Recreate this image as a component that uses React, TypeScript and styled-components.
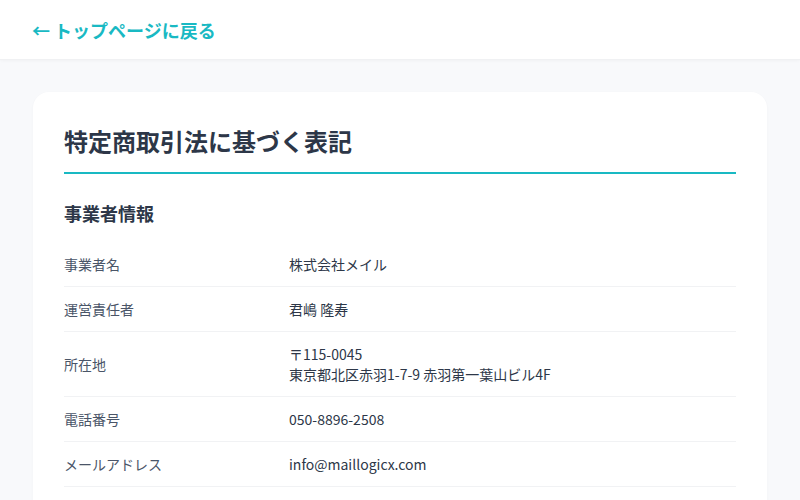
import React from "react";
import styled, { createGlobalStyle } from "styled-components";

const GlobalStyle = createGlobalStyle`
  html, body {
    margin: 0;
    padding: 0;
    background: #f8f9fb;
    font-family: "Noto Sans CJK JP", "Noto Sans", sans-serif;
    color: #2d3748;
  }
  * { box-sizing: border-box; }
`;

const Header = styled.header`
  height: 60px;
  background: #ffffff;
  display: flex;
  align-items: center;
  padding: 0 32px;
  border-bottom: 1px solid #f0f1f3;
  box-shadow: 0 1px 3px rgba(0, 0, 0, 0.03);
`;

const BackLink = styled.a`
  font-size: 18px;
  font-weight: 700;
  line-height: 28px;
  color: #19b9c3;
  text-decoration: none;
`;

const Main = styled.main`
  padding: 32px 33px;
`;

const Card = styled.section`
  background: #ffffff;
  border-radius: 16px;
  padding: 32px 31px;
  box-shadow: 0 1px 3px rgba(0, 0, 0, 0.03);
`;

const Title = styled.h1`
  margin: 0;
  font-size: 24px;
  font-weight: 700;
  line-height: 1.4;
  color: #2d3748;
  padding-bottom: 14px;
  border-bottom: 2px solid #19b9c3;
`;

const SectionTitle = styled.h2`
  margin: 27px 0 16px;
  font-size: 18px;
  font-weight: 700;
  line-height: 1.4;
  color: #2d3748;
`;

const Table = styled.dl`
  margin: 0;
`;

const Row = styled.div`
  display: flex;
  align-items: center;
  padding: 12px 0;
  border-bottom: 1px solid #f1f2f4;
`;

const Label = styled.dt`
  width: 225px;
  flex-shrink: 0;
  font-size: 14px;
  line-height: 20px;
  color: #4a5568;
`;

const Value = styled.dd`
  margin: 0;
  font-size: 14px;
  line-height: 20px;
  color: #2d3748;
`;

const rows: { label: string; value: string[] }[] = [
  { label: "事業者名", value: ["株式会社メイル"] },
  { label: "運営責任者", value: ["君嶋 隆寿"] },
  { label: "所在地", value: ["〒115-0045", "東京都北区赤羽1-7-9 赤羽第一葉山ビル4F"] },
  { label: "電話番号", value: ["050-8896-2508"] },
  { label: "メールアドレス", value: ["info@maillogicx.com"] },
];

export default function App() {
  return (
    <>
      <GlobalStyle />
      <Header>
        <BackLink href="#">← トップページに戻る</BackLink>
      </Header>
      <Main>
        <Card>
          <Title>特定商取引法に基づく表記</Title>
          <SectionTitle>事業者情報</SectionTitle>
          <Table>
            {rows.map((r) => (
              <Row key={r.label}>
                <Label>{r.label}</Label>
                <Value>
                  {r.value.map((v, i) => (
                    <React.Fragment key={i}>
                      {i > 0 && <br />}
                      {v}
                    </React.Fragment>
                  ))}
                </Value>
              </Row>
            ))}
          </Table>
        </Card>
      </Main>
    </>
  );
}
